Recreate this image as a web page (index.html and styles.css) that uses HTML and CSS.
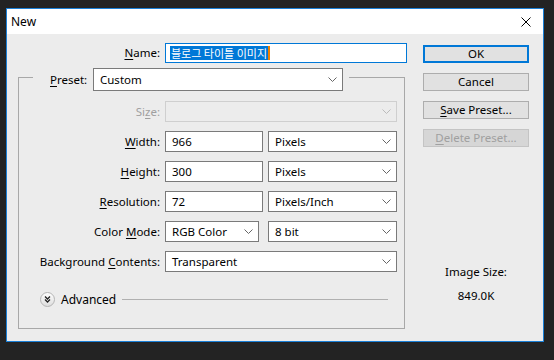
FILE: index.html
```html
<!DOCTYPE html>
<html>
<head>
<meta charset="utf-8">
<link rel="stylesheet" href="styles.css">
</head>
<body>
<div class="window">
  <div class="titlebar">
    <span class="title">New</span>
    <svg class="close" width="10" height="10" viewBox="0 0 10 10"><path d="M0.5 0.5 L9.5 9.5 M9.5 0.5 L0.5 9.5" stroke="#000" stroke-width="1" fill="none"/></svg>
  </div>
  <div class="content">
    <div class="left">
      <div class="name-row">
        <label class="lbl name-lbl"><u>N</u>ame:</label>
        <div class="name-input"><span class="sel">블로그 타이틀 이미지</span><span class="caret"></span></div>
      </div>
      <div class="group">
        <div class="legend">
          <label class="lbl preset-lbl"><u>P</u>reset:</label>
          <div class="select preset-sel"><span>Custom</span><svg class="chev" width="9" height="5" viewBox="0 0 9 5"><path d="M0.5 0.5 L4.5 4.5 L8.5 0.5" stroke="#666" fill="none"/></svg></div>
        </div>
        <div class="rows">
          <div class="row">
            <label class="lbl disabled">Si<u>z</u>e:</label>
            <div class="select wide dis"><span></span><svg class="chev" width="9" height="5" viewBox="0 0 9 5"><path d="M0.5 0.5 L4.5 4.5 L8.5 0.5" stroke="#bbb" fill="none"/></svg></div>
          </div>
          <div class="row">
            <label class="lbl"><u>W</u>idth:</label>
            <div class="input num">966</div>
            <div class="select unit"><span>Pixels</span><svg class="chev" width="9" height="5" viewBox="0 0 9 5"><path d="M0.5 0.5 L4.5 4.5 L8.5 0.5" stroke="#666" fill="none"/></svg></div>
          </div>
          <div class="row">
            <label class="lbl"><u>H</u>eight:</label>
            <div class="input num">300</div>
            <div class="select unit"><span>Pixels</span><svg class="chev" width="9" height="5" viewBox="0 0 9 5"><path d="M0.5 0.5 L4.5 4.5 L8.5 0.5" stroke="#666" fill="none"/></svg></div>
          </div>
          <div class="row">
            <label class="lbl"><u>R</u>esolution:</label>
            <div class="input num">72</div>
            <div class="select unit"><span>Pixels/Inch</span><svg class="chev" width="9" height="5" viewBox="0 0 9 5"><path d="M0.5 0.5 L4.5 4.5 L8.5 0.5" stroke="#666" fill="none"/></svg></div>
          </div>
          <div class="row">
            <label class="lbl">Color <u>M</u>ode:</label>
            <div class="select mode"><span>RGB Color</span><svg class="chev" width="9" height="5" viewBox="0 0 9 5"><path d="M0.5 0.5 L4.5 4.5 L8.5 0.5" stroke="#666" fill="none"/></svg></div>
            <div class="select unit bits"><span>8 bit</span><svg class="chev" width="9" height="5" viewBox="0 0 9 5"><path d="M0.5 0.5 L4.5 4.5 L8.5 0.5" stroke="#666" fill="none"/></svg></div>
          </div>
          <div class="row">
            <label class="lbl">Background <u>C</u>ontents:</label>
            <div class="select wide"><span>Transparent</span><svg class="chev" width="9" height="5" viewBox="0 0 9 5"><path d="M0.5 0.5 L4.5 4.5 L8.5 0.5" stroke="#666" fill="none"/></svg></div>
          </div>
        </div>
        <div class="advanced">
          <svg class="adv-icon" width="15" height="15" viewBox="0 0 15 15">
            <defs><linearGradient id="g" x1="0" y1="0" x2="0" y2="1"><stop offset="0" stop-color="#ffffff"/><stop offset="1" stop-color="#dcdcdc"/></linearGradient></defs>
            <circle cx="7.5" cy="7.5" r="7" fill="url(#g)" stroke="#b4b4b4"/>
            <path d="M5 4.5 L7.5 7 L10 4.5 M5 7.5 L7.5 10 L10 7.5" stroke="#222" stroke-width="1.3" fill="none"/>
          </svg>
          <span class="adv-text">Advanced</span>
          <div class="adv-line"></div>
        </div>
      </div>
    </div>
    <div class="right">
      <div class="btn ok">OK</div>
      <div class="btn">Cancel</div>
      <div class="btn"><u>S</u>ave Preset...</div>
      <div class="btn btn-dis"><u>D</u>elete Preset...</div>
      <div class="imgsize">Image Size:</div>
      <div class="imgval">849.0K</div>
    </div>
  </div>
</div>
</body>
</html>
```
FILE: styles.css
```css
* { box-sizing: border-box; }
html, body { margin: 0; padding: 0; }
body {
  background: #232323;
  width: 554px;
  height: 360px;
  overflow: hidden;
  font-family: "Noto Sans", "Noto Sans CJK KR", sans-serif;
  font-size: 11.5px;
  color: #000;
}
u { text-decoration: underline; text-underline-offset: 2px; }
.window {
  margin: 8px 0 0 6px;
  width: 538px;
  height: 334px;
  border: 1px solid #1a7fd6;
  background: #ececec;
}
.titlebar {
  height: 25px;
  background: #fff;
  display: flex;
  align-items: center;
  padding-left: 4px;
}
.title { font-size: 12px; flex: 1; }
.close { margin-right: 12px; }
.content { display: flex; }
.left { width: 400px; }
.lbl {
  text-align: right;
  white-space: nowrap;
  line-height: 21px;
}
.name-row {
  display: flex;
  margin-top: 9px;
  height: 20px;
}
.name-lbl { width: 153px; line-height: 20px; }
.name-input {
  margin-left: 5px;
  width: 242px;
  height: 20px;
  border: 1px solid #0078d7;
  background: #fff;
  display: flex;
  align-items: center;
  padding-left: 4px;
}
.sel {
  background: #0078d7;
  color: #fff;
  font-family: "Noto Sans CJK KR", sans-serif;
  font-size: 11px;
  line-height: 14px;
  height: 14px;
  padding: 0 1px;
}
.caret { width: 2px; height: 14px; background: #f08000; }
.group {
  margin-left: 11px;
  margin-top: 14px;
  width: 387px;
  height: 252px;
  border: 1px solid #a8a8a8;
}
.legend {
  margin-top: -10px;
  margin-left: 14px;
  width: 316px;
  height: 23px;
  background: #ececec;
  display: flex;
  padding-left: 17px;
}
.preset-lbl { width: 38px; text-align: left; line-height: 23px; }
.select {
  height: 21px;
  border: 1px solid #7a7a7a;
  background: #fff;
  display: flex;
  align-items: center;
  justify-content: space-between;
  padding: 0 5px 0 6px;
}
.preset-sel { margin-left: 5px; width: 250px; height: 23px; }
.rows {
  margin-top: 10px;
  display: flex;
  flex-direction: column;
  gap: 9px;
}
.row { display: flex; height: 21px; }
.row .lbl { width: 141px; margin-right: 5px; }
.disabled { color: #a0a0a0; }
.wide { width: 232px; }
.dis { border-color: #cfcfcf; background: #ececec; }
.input {
  height: 21px;
  border: 1px solid #7a7a7a;
  background: #fff;
  padding-left: 6px;
  line-height: 19px;
}
.num { width: 98px; }
.unit { width: 129px; margin-left: 5px; }
.mode { width: 94px; }
.bits { margin-left: 9px; }
.advanced {
  margin-top: 19px;
  display: flex;
  align-items: center;
  height: 16px;
  padding-left: 21px;
  padding-right: 16px;
}
.adv-text { margin-left: 6px; font-size: 12px; }
.adv-line { flex: 1; height: 1px; background: #b0b0b0; margin-left: 6px; }
.right {
  width: 106px;
  margin-left: 16px;
  padding-top: 11px;
  display: flex;
  flex-direction: column;
  gap: 10px;
}
.btn {
  height: 18px;
  background: #e1e1e1;
  border: 1px solid #adadad;
  text-align: center;
  line-height: 16px;
}
.ok { border: 2px solid #0078d7; line-height: 14px; }
.btn-dis { color: #a0a0a0; background: #d6d6d6; border-color: #c4c4c4; }
.imgsize { margin-top: 107px; text-align: center; line-height: 16px; }
.imgval { margin-top: -2px; text-align: center; line-height: 16px; }
```
